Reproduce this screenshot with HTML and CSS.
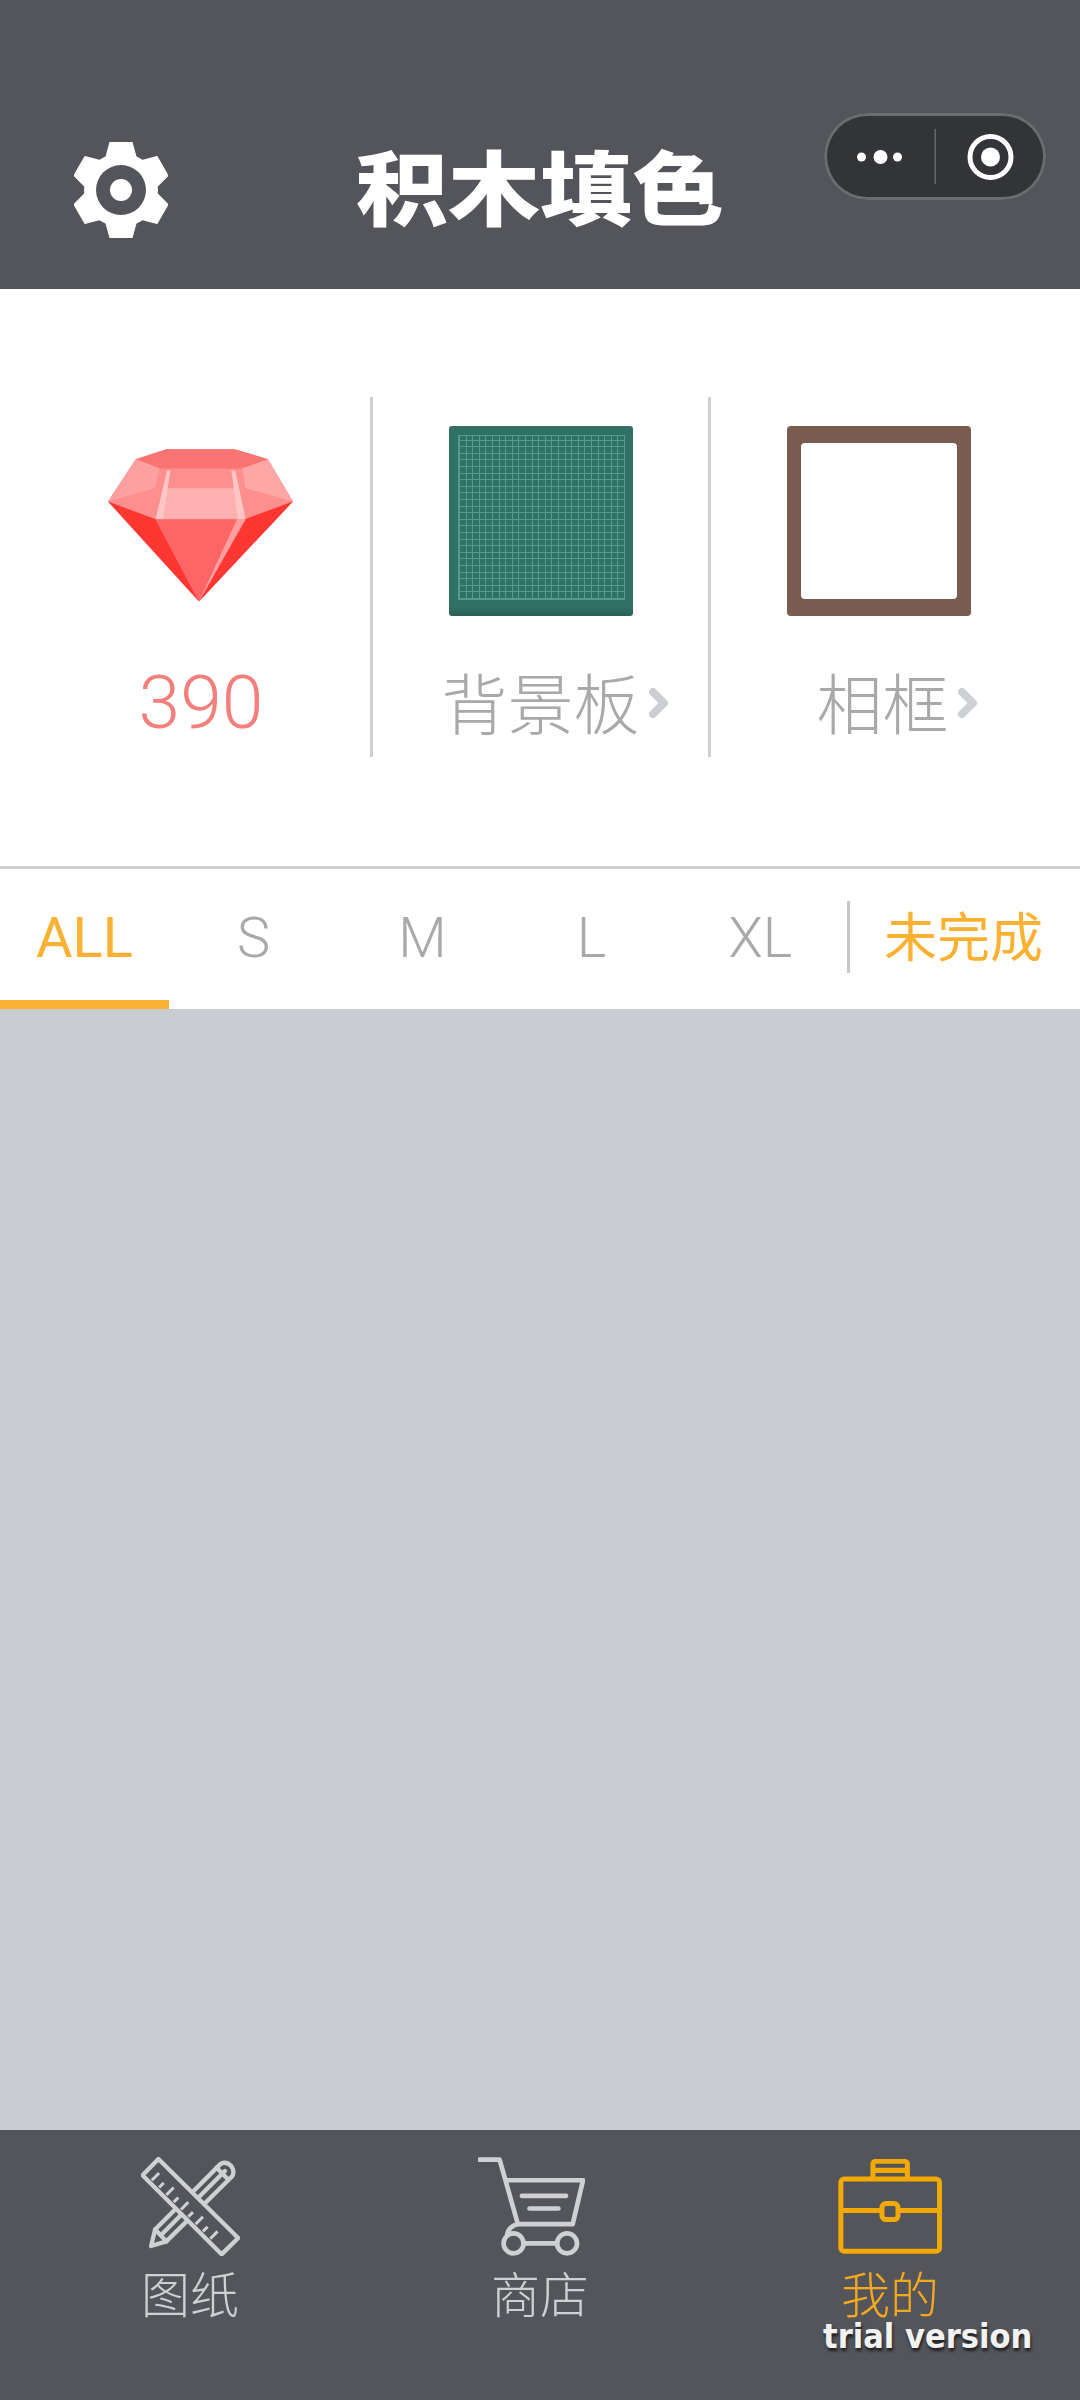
FILE: index.html
```html
<!DOCTYPE html>
<html lang="zh">
<head>
<meta charset="utf-8">
<title>积木填色</title>
<link rel="stylesheet" href="styles.css">
</head>
<body>
<div class="page">
  <header class="header">
    <svg class="gear" viewBox="-47 -48 94 96">
      <defs><path id="tooth" d="M-11-48L11-48L17-26L-17-26Z" stroke="#fff" stroke-width="1" stroke-linejoin="round"/></defs>
      <circle r="37" fill="#fff"/>
      <use href="#tooth" fill="#fff"/>
      <use href="#tooth" fill="#fff" transform="rotate(60)"/>
      <use href="#tooth" fill="#fff" transform="rotate(120)"/>
      <use href="#tooth" fill="#fff" transform="rotate(180)"/>
      <use href="#tooth" fill="#fff" transform="rotate(240)"/>
      <use href="#tooth" fill="#fff" transform="rotate(300)"/>
      <circle r="25" fill="#54555a"/>
      <circle r="11" fill="#fff"/>
    </svg>
    <h1 class="title">积木填色</h1>
    <div class="capsule">
      <svg class="capsule-icon" viewBox="0 0 221 87">
        <circle cx="37" cy="44" r="4.5" fill="#fff"/>
        <circle cx="56" cy="44" r="7" fill="#fff"/>
        <circle cx="73" cy="44" r="4.5" fill="#fff"/>
        <rect x="110" y="16" width="1.5" height="55" fill="#66676b"/>
        <circle cx="166" cy="44" r="20.5" fill="none" stroke="#fff" stroke-width="5"/>
        <circle cx="166" cy="44" r="9.5" fill="#fff"/>
      </svg>
    </div>
  </header>

  <section class="stats">
    <div class="stat">
      <div class="stat-icon">
        <svg class="gem" viewBox="145 208 555 458">
          <polygon points="320,208 525,208 625,238 700,365 418,665 145,365 228,238" fill="#ff8f8f"/>
          <polygon points="320,208 525,208 625,238 548,266 300,266 228,238" fill="#fb7474"/>
          <polygon points="228,238 300,266 285,325 145,365" fill="#ffa0a0"/>
          <polygon points="625,238 548,266 558,325 700,365" fill="#ffa6a6"/>
          <polygon points="325,272 515,272 530,325 315,325" fill="#ff8f8f"/>
          <polygon points="312,325 530,325 555,418 288,418" fill="#ffb0b0"/>
          <polygon points="322,272 332,272 310,418 288,418" fill="#ffc6c6"/>
          <polygon points="515,272 527,272 558,418 535,418" fill="#ffc6c6"/>
          <polygon points="145,365 288,418 418,665" fill="#ff3733"/>
          <polygon points="288,418 535,418 418,665" fill="#ff6564"/>
          <polygon points="555,418 700,365 418,665" fill="#ff3733"/>
          <polygon points="532,418 558,418 418,665" fill="#ff9e9e"/>
        </svg>
      </div>
      <div class="stat-label stat-value">390</div>
    </div>
    <div class="stat stat-lined">
      <div class="stat-icon">
        <div class="board"><div class="board-grid"></div></div>
      </div>
      <div class="stat-label">背景板<svg class="chevron" viewBox="0 0 20 30"><path d="M4 4L15 15L4 26" fill="none" stroke="#cdced3" stroke-width="8" stroke-linejoin="round" stroke-linecap="round"/></svg></div>
    </div>
    <div class="stat stat-lined">
      <div class="stat-icon">
        <div class="frame"><div class="frame-inner"></div></div>
      </div>
      <div class="stat-label stat-label-shift">相框<svg class="chevron" viewBox="0 0 20 30"><path d="M4 4L15 15L4 26" fill="none" stroke="#cdd1d3" stroke-width="8" stroke-linejoin="round" stroke-linecap="round"/></svg></div>
    </div>
  </section>

  <nav class="tabs">
    <div class="tab tab-active">ALL</div>
    <div class="tab">S</div>
    <div class="tab">M</div>
    <div class="tab">L</div>
    <div class="tab">XL</div>
    <div class="tab-filter">未完成</div>
  </nav>

  <main class="content"></main>

  <footer class="bar">
    <div class="bar-item">
      <svg class="bar-icon" viewBox="118 110 297 298">
        <g fill="none" stroke="#cfd0d3" stroke-width="13" stroke-linejoin="round" stroke-linecap="round">
          <path d="M148 378L160 328L358 130Q375 122 390 138Q400 155 392 168L194 364Z"/>
          <path d="M160 328L194 364M178 345L370 152M345 142L380 178"/>
        </g>
        <polygon points="170,116 410,354 360,403 122,165" fill="#54555a" stroke="#cfd0d3" stroke-width="13" stroke-linejoin="round"/>
        <path d="M150 180L172 158M172 202L186 188M194 224L216 202M216 246L230 232M238 268L260 246M260 290L274 276M282 312L304 290M304 334L318 320M326 356L348 334" fill="none" stroke="#cfd0d3" stroke-width="9"/>
      </svg>
      <span class="bar-text">图纸</span>
    </div>
    <div class="bar-item">
      <svg class="bar-icon bar-cart" viewBox="1130 110 322 298">
        <g fill="none" stroke="#cfd0d3" stroke-width="14" stroke-linejoin="round" stroke-linecap="round">
          <path d="M1135 118L1195 118L1250 312L1415 312L1446 180L1215 180"/>
          <path d="M1262 227L1395 227M1285 265L1372 265"/>
          <path d="M1250 312Q1222 320 1218 342"/>
          <circle cx="1237" cy="370" r="30"/>
          <circle cx="1398" cy="370" r="30"/>
          <path d="M1267 370L1368 370"/>
        </g>
      </svg>
      <span class="bar-text">商店</span>
    </div>
    <div class="bar-item bar-item-active">
      <svg class="bar-icon bar-case" viewBox="178 118 310 284">
        <g fill="none" stroke="#f2a900" stroke-width="15" stroke-linejoin="round">
          <rect x="186" y="178" width="295" height="216" rx="10"/>
          <path d="M282 178L282 134Q282 125 292 125L375 125Q385 125 385 134L385 178M282 152L385 152"/>
          <path d="M186 272L306 272M360 272L481 272"/>
          <rect x="309" y="251" width="48" height="48" rx="12"/>
        </g>
      </svg>
      <span class="bar-text">我的</span>
    </div>
    <div class="trial">trial version</div>
  </footer>
</div>
</body>
</html>
```
FILE: styles.css
```css
* {
  box-sizing: border-box;
}

html,
body {
  margin: 0;
  padding: 0;
}

body {
  font-family: "Noto Sans CJK SC", "Liberation Sans", sans-serif;
  background: #c9ccd1;
}

.page {
  width: 1080px;
  height: 2400px;
  display: flex;
  flex-direction: column;
  overflow: hidden;
}

/* Header */
.header {
  position: relative;
  height: 289px;
  padding-top: 91px;
  background: #54555a;
  display: grid;
  grid-template-columns: 1fr auto 1fr;
  align-items: center;
}

.gear {
  width: 94px;
  height: 96px;
  margin-left: 74px;
}

.title {
  margin: 0;
  font-size: 92px;
  line-height: 100px;
  font-weight: 900;
  color: #fff;
  transform: translateY(-6px) scaleY(0.88);
}

.capsule {
  position: absolute;
  top: 113px;
  right: 34px;
  width: 222px;
  height: 87px;
  border-radius: 44px;
  background: #333438;
  box-shadow: inset 0 0 0 3px #6b6c70;
}

.capsule-icon {
  display: block;
  width: 222px;
  height: 87px;
}

/* Stats */
.stats {
  background: #fff;
  padding: 108px 34px 109px 30px;
  display: grid;
  grid-template-columns: 340px 338px 338px;
}

.stat {
  height: 360px;
  display: flex;
  flex-direction: column;
  align-items: center;
  padding-top: 29px;
}

.stat-lined {
  border-left: 3px solid #cfd0d3;
}

.stat-icon {
  height: 190px;
  display: flex;
  align-items: center;
  justify-content: center;
}

.gem {
  width: 185px;
  height: 153px;
  margin-top: 8px;
}

.board {
  width: 184px;
  height: 190px;
  border-radius: 3px;
  padding: 9px 8px 16px 9px;
  background: linear-gradient(#3a6d63 0, #2f7165 6px, #2f7165 180px, #2c5f56 190px);
}

.board-grid {
  width: 100%;
  height: 100%;
  border: 1px solid #559b8d;
  background-color: #2f7165;
  background-image:
    repeating-linear-gradient(90deg, #559b8d 0 1px, transparent 1px 6.6px),
    repeating-linear-gradient(0deg, #559b8d 0 1px, transparent 1px 6.6px);
}

.frame {
  width: 184px;
  height: 190px;
  border-radius: 4px;
  padding: 17px 14px;
  background: #7a5b4f;
}

.frame-inner {
  width: 100%;
  height: 100%;
  border-radius: 4px;
  background: #fff;
}

.stat-label {
  margin-top: 44px;
  height: 80px;
  display: flex;
  align-items: center;
  font-size: 66px;
  line-height: 80px;
  font-weight: 300;
  color: #a9a9a9;
}

.stat-value {
  margin-top: 46px;
  font-family: Roboto, "Liberation Sans", sans-serif;
  font-size: 75px;
  color: #f47f7d;
  margin-left: 2px;
}

.stat-label-shift {
  padding-left: 8px;
}

.chevron {
  width: 20px;
  height: 30px;
  margin-top: 5px;
  margin-left: 9px;
  margin-right: -29px;
  flex: none;
}

/* Tabs */
.tabs {
  height: 143px;
  border-top: 3px solid #cdcdcd;
  background: #fff;
  display: flex;
  align-items: stretch;
}

.tab {
  width: 169px;
  height: 140px;
  padding-top: 7px;
  border-bottom: 9px solid transparent;
  display: flex;
  align-items: center;
  justify-content: center;
  font-family: Roboto, "Liberation Sans", sans-serif;
  font-size: 56px;
  font-weight: 300;
  color: #a9a9a9;
}

.tab-active {
  color: #fdb133;
  font-weight: 400;
  border-bottom-color: #fdb133;
}

.tab-filter {
  margin: 32px 0 36px 2px;
  padding-left: 34px;
  padding-bottom: 6px;
  border-left: 3px solid #c5c6c8;
  display: flex;
  align-items: center;
  font-size: 53px;
  font-weight: 400;
  color: #fdb133;
  white-space: nowrap;
}

/* Grey body */
.content {
  flex: 1;
  background: #c9ccd1;
}

/* Bottom bar */
.bar {
  position: relative;
  height: 270px;
  padding: 27px 15px 0;
  background: #54555a;
  display: grid;
  grid-template-columns: repeat(3, 350px);
  align-items: start;
}

.bar-item {
  display: flex;
  flex-direction: column;
  align-items: center;
  color: #cfd0d3;
}

.bar-item-active {
  color: #f2a91e;
}

.bar-icon {
  width: 99px;
  height: 99px;
  display: block;
}

.bar-cart {
  width: 107px;
  transform: translateX(-9px);
}

.bar-case {
  width: 104px;
  height: 95px;
  margin: 2px 0;
}

.bar-text {
  margin-top: 12px;
  font-size: 49px;
  line-height: 48px;
  font-weight: 300;
}

.trial {
  position: absolute;
  left: 823px;
  top: 192px;
  font-family: "DejaVu Sans Condensed", "DejaVu Sans", sans-serif;
  font-stretch: condensed;
  font-size: 34px;
  line-height: 28px;
  font-weight: 700;
  color: #f2f2f2;
  white-space: nowrap;
  text-shadow: 1px 3px 3px #1f1f22;
}
```
